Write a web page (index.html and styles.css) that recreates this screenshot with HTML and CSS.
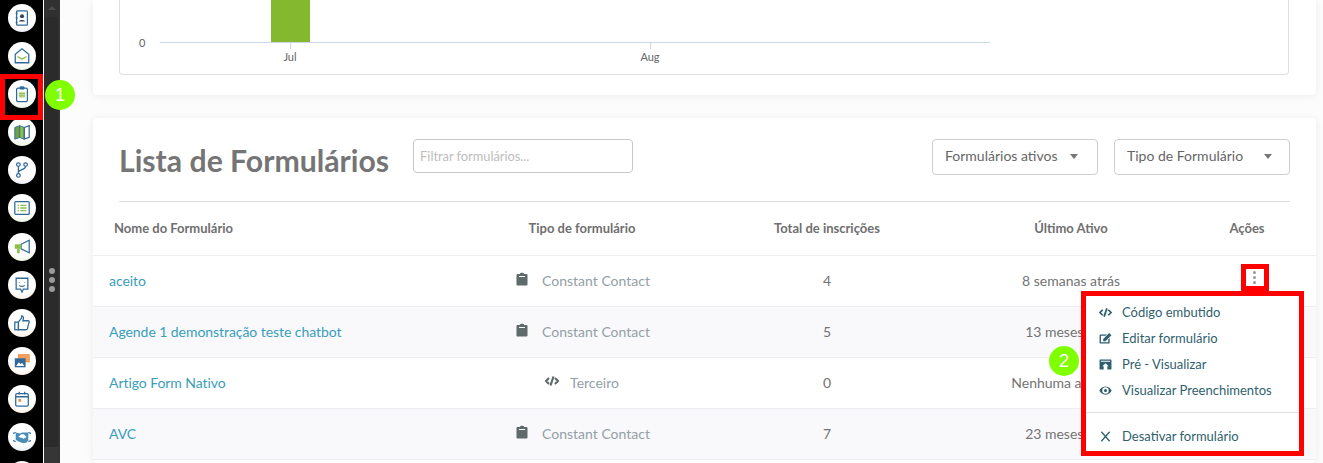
FILE: index.html
```html
<!DOCTYPE html>
<html lang="pt">
<head>
<meta charset="utf-8">
<title>Lista de Formulários</title>
<link rel="stylesheet" href="styles.css">
</head>
<body>
<div class="app">
  <nav class="rail">
    <a class="nav"><svg viewBox="0 0 20 20"><rect x="4" y="2" width="12" height="16" rx="1" class="b"/><circle cx="10" cy="8" r="2.3" fill="#33475f"/><path d="M6.500 14c0-2.500 7-2.500 7 0z" fill="#33475f"/><path d="M3 5h2M3 10h2M3 15h2" class="b"/></svg></a>
    <a class="nav tg"><svg viewBox="0 0 20 20"><path d="M2.500 8L10 2l7.500 6v9.500h-15z" class="b"/><path d="M5 10.500l5 3 5-3" class="g"/></svg></a>
    <a class="nav tg"><svg viewBox="0 0 20 20"><rect x="4" y="3.500" width="12" height="15" rx="1.500" class="b"/><rect x="7.500" y="1.500" width="5" height="3.500" fill="#2f6a9a"/><rect x="6.500" y="7.500" width="7" height="7" fill="#cfe3b4"/><path d="M6.500 9.500h7M6.500 12h7" class="g"/></svg></a>
    <a class="nav tg"><svg viewBox="0 0 20 20"><path d="M2 5l5.500-2v13L2 18z" fill="#6fa23c" stroke="#2f6a9a"/><path d="M7.500 3l5 2v13l-5-2z" fill="#8cc04b" stroke="#2f6a9a"/><path d="M12.500 5L18 3v13l-5.500 2z" class="b"/></svg></a>
    <a class="nav"><svg viewBox="0 0 20 20"><circle cx="6" cy="4" r="2" class="b"/><circle cx="14" cy="4" r="2" class="b"/><circle cx="6" cy="16" r="2" class="b"/><path d="M6 6v8M14 6c0 4-8 3-8 7" class="b"/></svg></a>
    <a class="nav tg"><svg viewBox="0 0 20 20"><rect x="2" y="3" width="16" height="14" rx="1" class="b"/><path d="M8 7h7M8 10h7M8 13h7M5 7h1.500M5 10h1.500M5 13h1.500" class="g"/></svg></a>
    <a class="nav tg"><svg viewBox="0 0 20 20"><path d="M9 7l9-4.500v14L9 12z" class="b"/><rect x="2" y="7" width="7" height="5" fill="#8cc04b"/><path d="M4.500 12v5h3v-5" fill="#8cc04b"/></svg></a>
    <a class="nav to"><svg viewBox="0 0 20 20"><path d="M3.500 2.500h13v12H11.500L10 18l-1.500-3.500h-5z" class="b"/><path d="M7 7v.500M13 7v.500M7 10.500c2 1.500 4 1.500 6 0" class="b"/></svg></a>
    <a class="nav to"><svg viewBox="0 0 20 20"><rect x="2" y="9" width="4" height="8.500" class="b"/><path d="M6 9l3.500-4.500V2c2.500 0 2.500 3 1.500 5.500h6c1.500 0 1 2 .5 3l-1.500 6c-.2 1-1 1-2 1H6z" class="b"/></svg></a>
    <a class="nav to"><svg viewBox="0 0 20 20"><rect x="6" y="3" width="12" height="8" fill="#f4a261" stroke="#ee8a3c"/><rect x="2" y="7" width="12" height="10" fill="#2f6a9a"/><path d="M3.500 15.500l3-4 2 2 1.500-1.500 2.500 3.500z" fill="#fff"/></svg></a>
    <a class="nav to"><svg viewBox="0 0 20 20"><rect x="3" y="4" width="14" height="14" rx="1.500" class="b"/><path d="M3 7.500h14M7 2v3M13 2v3" class="b"/><rect x="6" y="10" width="3" height="3" fill="#ee8a3c"/></svg></a>
    <a class="nav tb"><svg viewBox="0 0 20 20"><path d="M0 6l3-1M0 14l3 1M20 6l-3-1M20 14l-3 1" class="b"/><path d="M3 5l5 1 2-1 3 0 4 0v9l-2 2-3 1-3-1-3-1-3-2z" fill="#4a8cb5"/><path d="M6 10l3-3h3l3 3-3 2-2-1z" fill="#fff"/></svg></a>
    <a class="nav"></a>
  </nav>
  <div class="splitter">
    <span class="arrow"></span>
    <div class="handle"><i></i><i></i><i></i></div>
    <span class="track-end"></span>
  </div>
  <main class="main">
    <section class="card chart-card">
      <div class="chart">
        <span class="y-label">0</span>
        <div class="plot">
          <div class="bars"><span class="bar"></span></div>
          <div class="ticks">
            <span class="tick tick-jul">Jul</span>
            <span class="tick tick-aug">Aug</span>
          </div>
        </div>
      </div>
    </section>
    <section class="card list-card">
      <header class="list-head">
        <h1 class="title">Lista de Formulários</h1>
        <input class="filter" type="text" placeholder="Filtrar formulários...">
        <button class="select select-a" type="button">Formulários ativos<span class="caret"></span></button>
        <button class="select select-b" type="button">Tipo de Formulário<span class="caret"></span></button>
      </header>
      <div class="row row-head">
        <div class="c-name">Nome do Formulário</div>
        <div>Tipo de formulário</div>
        <div>Total de inscrições</div>
        <div>Último Ativo</div>
        <div>Ações</div>
      </div>
      <div class="row">
        <div class="c-name"><a class="link">aceito</a></div>
        <div class="type"><svg class="ti" viewBox="0 0 12 14"><path d="M4 1.500C4 .5 8 .5 8 1.500V2h2.500c.5 0 1 .5 1 1v9.500c0 .5-.5 1-1 1h-9c-.5 0-1-.5-1-1V3c0-.5.5-1 1-1H4zM3 4v1h6V4z"/></svg>Constant Contact</div>
        <div class="num">4</div>
        <div class="num">8 semanas atrás</div>
        <div class="act"><span class="kebab"><i></i><i></i><i></i></span></div>
      </div>
      <div class="row alt">
        <div class="c-name"><a class="link">Agende 1 demonstração teste chatbot</a></div>
        <div class="type"><svg class="ti" viewBox="0 0 12 14"><path d="M4 1.500C4 .5 8 .5 8 1.500V2h2.500c.5 0 1 .5 1 1v9.500c0 .5-.5 1-1 1h-9c-.5 0-1-.5-1-1V3c0-.5.5-1 1-1H4zM3 4v1h6V4z"/></svg>Constant Contact</div>
        <div class="num">5</div>
        <div class="num">13 meses atrás</div>
        <div></div>
      </div>
      <div class="row">
        <div class="c-name"><a class="link">Artigo Form Nativo</a></div>
        <div class="type"><svg class="ti ti-code" viewBox="0 0 14 12"><path d="M4 3L1 6l3 3M10 3l3 3-3 3M8.500 1.500l-3 9" fill="none" stroke="#5f6b6b" stroke-width="2.200"/></svg>Terceiro</div>
        <div class="num">0</div>
        <div class="num">Nenhuma atividade</div>
        <div></div>
      </div>
      <div class="row alt">
        <div class="c-name"><a class="link">AVC</a></div>
        <div class="type"><svg class="ti" viewBox="0 0 12 14"><path d="M4 1.500C4 .5 8 .5 8 1.500V2h2.500c.5 0 1 .5 1 1v9.500c0 .5-.5 1-1 1h-9c-.5 0-1-.5-1-1V3c0-.5.5-1 1-1H4zM3 4v1h6V4z"/></svg>Constant Contact</div>
        <div class="num">7</div>
        <div class="num">23 meses atrás</div>
        <div></div>
      </div>
    </section>
  </main>
  <span class="mark-nav"></span>
  <span class="badge badge-1">1</span>
  <span class="badge badge-2">2</span>
  <div class="menu">
    <a class="item"><svg viewBox="0 0 14 12"><path d="M4 3L1 6l3 3M10 3l3 3-3 3M8.500 1.500l-3 9" fill="none" stroke="#2f5f6e" stroke-width="1.900"/></svg>Código embutido</a>
    <a class="item"><svg viewBox="0 0 14 12"><path d="M10 7v3H2V3h5l1.500-1.500H1.500C1 1.500.5 2 .5 2.500v8c0 .5.5 1 1 1h9c.5 0 1-.5 1-1V5.500zM4.500 6.500V9h2.500l6.500-6.500L11 0z" fill="#2f5f6e"/></svg>Editar formulário</a>
    <a class="item"><svg viewBox="0 0 14 12"><path d="M1.500 .5h11c.5 0 1 .5 1 1v9c0 .5-.5 1-1 1H9V8h1.500L7 4.500 3.500 8H5v3.500H1.500c-.5 0-1-.5-1-1v-9c0-.5.5-1 1-1zM2 2v1h10V2z" fill="#2f5f6e"/></svg>Pré - Visualizar</a>
    <a class="item"><svg viewBox="0 0 14 12"><path d="M7 1.500C3.500 1.500 1.200 4 .3 6c.9 2 3.200 4.500 6.700 4.500S12.800 8 13.700 6C12.800 4 10.500 1.500 7 1.500zM7 9.500a3.500 3.500 0 110-7 3.500 3.500 0 010 7zM7 4.300a1.700 1.700 0 100 3.400 1.700 1.700 0 000-3.400z" fill="#2f5f6e"/></svg>Visualizar Preenchimentos</a>
    <hr class="sep">
    <a class="item"><svg viewBox="0 0 14 12"><path d="M2.500 .8l9 10.400M11.500 .8l-9 10.400" fill="none" stroke="#2f5f6e" stroke-width="1.400"/></svg>Desativar formulário</a>
  </div>
</div>
</body>
</html>
```
FILE: styles.css
```css
* { box-sizing: border-box; }
html, body { margin: 0; height: 100%; overflow: hidden; }
body { font-family: Lato, "Liberation Sans", sans-serif; color: #6f6f6f; background: #fcfcfc; }

.app { position: relative; display: flex; height: 463px; overflow: hidden; }

.rail { flex: 0 0 44px; display: flex; flex-direction: column; align-items: center; gap: 10.1px; padding: 4px 0 0 1px; background: #000; border-right: 1px solid #fff; }
.nav { flex: 0 0 28px; width: 28px; height: 28px; border-radius: 50%; display: flex; align-items: center; justify-content: center; background: radial-gradient(circle at 50% 30%, #fff 60%, #dcdfea 100%); }
.nav.tg { background: radial-gradient(circle at 50% 30%, #fff 60%, #dbe9c9 100%); }
.nav.to { background: radial-gradient(circle at 50% 30%, #fff 60%, #f6dfca 100%); }
.nav.tb { background: radial-gradient(circle at 50% 30%, #fff 60%, #cfe2ee 100%); }
.nav svg { width: 18px; height: 18px; }
.b { fill: none; stroke: #2f6a9a; stroke-width: 1.400; }
.g { fill: none; stroke: #8cc04b; stroke-width: 1.400; }

.splitter { flex: 0 0 16px; display: flex; flex-direction: column; align-items: center; background: #2b2b2b; border-right: 2px solid #333; }
.arrow { flex: 0 0 17px; width: 100%; background: #303030; position: relative; }
.arrow::after { content: ""; position: absolute; left: 4px; top: 6px; border: 4px solid transparent; border-top: 0; border-bottom: 4px solid #4c4c4c; }
.handle { flex: 1; display: flex; flex-direction: column; align-items: center; gap: 3px; padding: 251px 0 0 2px; }
.handle i { width: 6px; height: 6px; border-radius: 50%; background: #9a9a9a; }
.track-end { flex: 0 0 16px; width: 100%; background: #363636; }

.main { flex: 1; min-width: 0; padding: 0 7px 0 33px; display: flex; flex-direction: column; gap: 23px; }
.card { background: #fff; border-radius: 4px; box-shadow: 0 1px 8px rgba(0,0,0,.07); }

.chart-card { flex: 0 0 95px; padding: 0 27px 20px 26px; border-radius: 0 0 4px 4px; }
.chart { height: 75px; position: relative; border: 1px solid #dfdfdf; border-top: 0; border-radius: 0 0 4px 4px; padding-left: 40px; }
.y-label { position: absolute; left: 19px; top: 36px; font-size: 11px; line-height: 14px; color: #666; }
.plot { width: 830px; }
.bars { height: 43px; border-bottom: 1px solid #ccd6eb; padding-left: 111px; }
.bar { display: block; width: 39px; height: 42px; background: #84b82f; }
.ticks { position: relative; height: 31px; }
.tick { position: absolute; top: 7px; width: 40px; margin-left: -20px; text-align: center; font-size: 11px; line-height: 14px; color: #666; }
.tick::before { content: ""; position: absolute; left: 50%; top: -7px; width: 1px; height: 6px; background: #ccd6eb; }
.tick-jul { left: 130px; }
.tick-aug { left: 490px; }

.list-card { flex: 1; }
.list-head { display: flex; align-items: flex-start; margin: 0 26px 0 26px; padding-top: 21px; height: 84px; border-bottom: 1px solid #dedede; }
.title { margin: 0 24px 0 0; font-size: 30.2px; line-height: 42px; font-weight: 700; color: #757575; white-space: nowrap; }
.filter { width: 220px; height: 34px; padding: 0 6px; border: 1px solid #c9c9c9; border-radius: 4px; font: 12.8px Lato, sans-serif; color: #666; outline: 0; }
.filter::placeholder { color: #bdbdbd; opacity: 1; }
.select { display: flex; align-items: center; height: 36px; padding: 0 12px 3px; background: #fff; border: 1px solid #cfcfcf; border-radius: 4px; font: 14px Lato, sans-serif; color: #666; white-space: nowrap; }
.select-a { width: 166px; margin-left: auto; }
.select-b { width: 176px; margin-left: 16px; }
.select-a .caret { margin-right: 7px; }
.caret { margin-left: auto; margin-right: 5px; margin-top: 2px; border: 4px solid transparent; border-top: 5px solid #777; border-bottom: 0; }

.row { display: grid; grid-template-columns: 381px 216px 274px 214px 138px; align-items: center; height: 51px; padding-bottom: 2px; border-bottom: 1px solid #eeeef2; font-size: 14px; text-align: center; color: #737373; }
.row-head { height: 54px; font-weight: 700; font-size: 13px; color: #6f6f6f; }
.row-head .c-name { padding-left: 21px; }
.alt { background: #f9f9fc; }
.c-name { padding-left: 16px; text-align: left; }
.link { color: #3a9dbb; letter-spacing: -0.06px; }
.type { display: flex; justify-content: center; align-items: center; gap: 14px; padding-left: 2px; color: #93a0a6; }
.ti { width: 12px; height: 14px; fill: #5f6b6b; margin-top: -3px; }
.ti-code { width: 14px; height: 12px; margin: -3px -3px 0 -2px; }
.act { align-self: start; }
.kebab { display: flex; flex-direction: column; align-items: center; justify-content: center; gap: 1.500px; width: 28px; height: 27px; margin: 8px 0 0 63px; padding-right: 1px; border: 5px solid #f00; }
.kebab i { width: 3.500px; height: 3.500px; border-radius: 50%; background: #999; }

.mark-nav { position: absolute; left: 0; top: 74px; width: 43px; height: 46px; border: 5px solid #f00; }
.badge { position: absolute; width: 30px; height: 30px; border-radius: 50%; background: #7fff00; color: #fff; font: 18px/30px "Liberation Sans", sans-serif; text-align: center; }
.badge-1 { left: 45px; top: 80px; }
.badge-2 { left: 1049px; top: 346px; }

.menu { position: absolute; left: 1081px; top: 291px; width: 223px; height: 165px; padding-top: 3px; background: #fff; border: 5px solid #f00; }
.item { display: flex; align-items: center; height: 26px; padding-left: 13px; gap: 10px; font-size: 13px; color: #2f5f6e; white-space: nowrap; }
.item svg { flex: 0 0 13px; width: 13px; height: 11px; }
.sep { margin: 9px 0 10px; border: 0; border-top: 1px solid #e2e2e2; }
```
